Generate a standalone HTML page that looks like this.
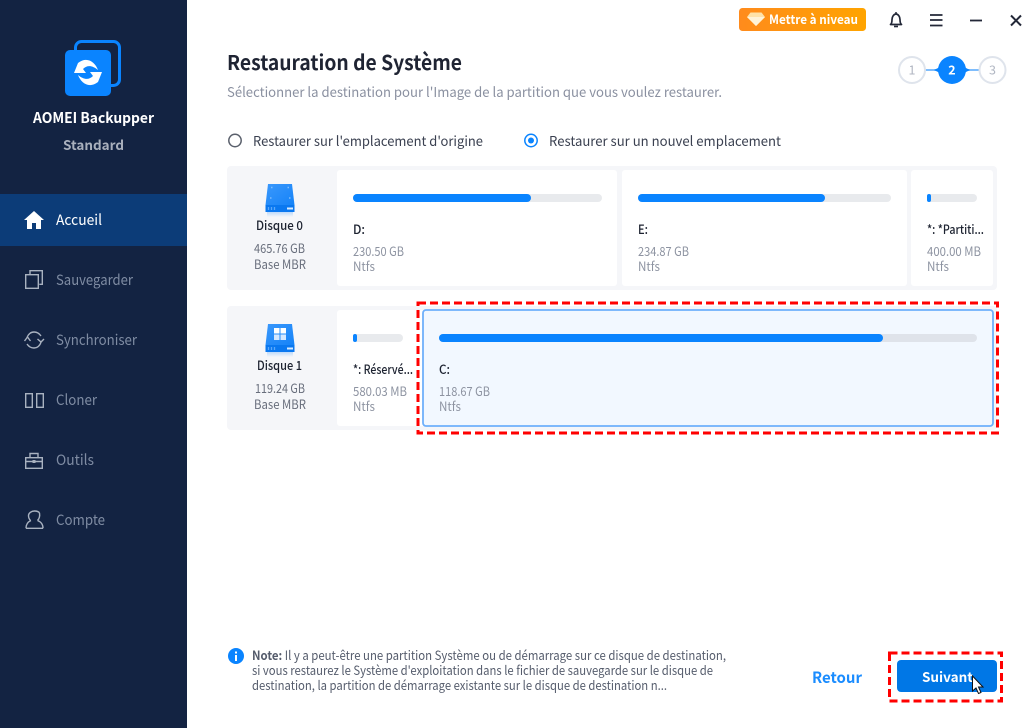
<!DOCTYPE html>
<html><head><meta charset="utf-8"><style>
html,body{margin:0;padding:0;background:#fff;width:1035px;height:728px;overflow:hidden}
svg{display:block}
text{font-family:"Noto Sans CJK SC","Liberation Sans",sans-serif;white-space:pre}
.side{fill:#7f8ca3;font-size:14.500px}
.cap{fill:#8d93a1;font-size:12.500px}
.lbl{fill:#1c2230;font-size:12.500px;font-weight:500}
.note{fill:#555c6c;font-size:12.500px}
.ic{fill:none;stroke:#a9b2c0;stroke-width:1.400}
</style></head><body>
<svg width="1035" height="728" viewBox="0 0 1035 728" xmlns="http://www.w3.org/2000/svg">
<defs>
<linearGradient id="og" x1="0" x2="1" y1="0" y2="0"><stop offset="0" stop-color="#ff8b1c"/><stop offset="1" stop-color="#ffa400"/></linearGradient>
<linearGradient id="dk" x1="0" x2="1" y1="0" y2="1"><stop offset="0" stop-color="#3a98fc"/><stop offset="1" stop-color="#1583f8"/></linearGradient>
<linearGradient id="sh" x1="0" x2="0" y1="0" y2="1"><stop offset="0" stop-color="#bcd9fb"/><stop offset="1" stop-color="#f5f6f9"/></linearGradient>
</defs>
<rect width="1035" height="728" fill="#fff"/>
<rect width="187" height="728" fill="#132342"/>
<rect y="194" width="187" height="52" fill="#0c3c78"/>

<!-- logo -->
<rect x="75.500" y="41.500" width="44" height="44" rx="6" fill="none" stroke="#0a84ff" stroke-width="3"/>
<rect x="65" y="50" width="46" height="46" rx="5" fill="#0a84ff"/>
<path d="M78 63L74 73L86 73L83 69C87 65 92 65 98 70C95 62 87 56 78 63z" fill="#fff"/>
<path d="M98 82L102 72L90 72L93 76C89 80 84 80 78 75C81 83 89 89 98 82z" fill="#fff"/>
<text x="33" y="123" font-size="14.500" font-weight="700" fill="#fff" textLength="121" lengthAdjust="spacingAndGlyphs">AOMEI Backupper</text>
<text x="63" y="150" font-size="13.500" font-weight="700" fill="#a9b0bd" textLength="61" lengthAdjust="spacingAndGlyphs">Standard</text>

<!-- nav -->
<path d="M24 220l10-9 10 9h-3v9h-5v-6h-4v6h-5v-9z" fill="#fff"/>
<text x="56" y="225" font-size="14.500" fill="#fff" textLength="46" lengthAdjust="spacingAndGlyphs">Accueil</text>
<rect x="25.700" y="274.700" width="12.600" height="13.600" class="ic"/>
<path d="M30 274v-3.300h12.300v13.600h-3" class="ic"/>
<text x="56" y="285" class="side" textLength="77" lengthAdjust="spacingAndGlyphs">Sauvegarder</text>
<path d="M27 338c1-4 4-6 7-6s5 1 7 4M41 342c-1 4-4 6-7 6s-5-1-7-4" class="ic"/>
<path d="M24.500 341l3-4 3 4M37.500 339l3.500 3 3-3" class="ic"/>
<text x="56" y="345" class="side" textLength="81" lengthAdjust="spacingAndGlyphs">Synchroniser</text>
<rect x="25.700" y="393.700" width="6.600" height="13.600" class="ic"/><rect x="36.700" y="393.700" width="6.600" height="13.600" class="ic"/>
<text x="56" y="405" class="side" textLength="41" lengthAdjust="spacingAndGlyphs">Cloner</text>
<rect x="25.700" y="457.700" width="16.600" height="10.600" class="ic"/>
<path d="M25.700 461.500h16.600M30 457.500v-4h8v4" class="ic"/><rect x="32.500" y="460" width="3" height="3" fill="#a9b2c0"/>
<text x="56" y="465" class="side" textLength="38" lengthAdjust="spacingAndGlyphs">Outils</text>
<path d="M30.500 520.500c-1.500-1.500-2-3-2-5 0-2.500 3-4.500 6-4.500 2.500 0 4.500 1 5 2" class="ic"/>
<path d="M39.500 513c.5 3-.5 6-2 7.500" class="ic"/>
<path d="M26 528.300c0-4 2-6.500 5-7.800M43 528.300c0-4-2-6.500-5.500-7.800M26 528.300h17" class="ic"/>
<text x="56" y="525" class="side" textLength="49" lengthAdjust="spacingAndGlyphs">Compte</text>

<!-- top bar -->
<rect x="739" y="8" width="127" height="23" rx="3.500" fill="url(#og)"/>
<path d="M750.500 12.500h11l3.500 4.500-9 9-9-9z" fill="#ffe2a8"/><path d="M747 17h18l-9 9z" fill="#fff3d8"/>
<text x="769" y="24" font-size="12.500" font-weight="700" fill="#fff" textLength="89" lengthAdjust="spacingAndGlyphs">Mettre à niveau</text>
<path d="M890.500 24.500c1.500-1 1.500-3 1.500-5 0-3 2-5.500 4-5.500s4 2.500 4 5.500c0 2 0 4 1.500 5z" fill="none" stroke="#232838" stroke-width="1.700" stroke-linejoin="round"/>
<path d="M894 26.500h4" stroke="#232838" stroke-width="1.600"/><path d="M896 12v2" stroke="#232838" stroke-width="1.500"/>
<path d="M930 15h12.500M930 20h12.500M930 25.500h12.500" stroke="#232838" stroke-width="1.800"/>
<path d="M970 20.500h12" stroke="#232838" stroke-width="1.800"/>
<path d="M1011 15.500l10 10M1021 15.500l-10 10" stroke="#232838" stroke-width="2"/>

<!-- steps -->
<path d="M925 70h14M965 70h14" stroke="#7fbdfc" stroke-width="2"/>
<path d="M934 70l6-3v6zM970 70l-6-3v6z" fill="#0a84ff"/>
<circle cx="912" cy="70" r="13" fill="#fff" stroke="#dfe4ec" stroke-width="2"/>
<circle cx="952" cy="70" r="14" fill="#0a84ff"/>
<circle cx="992.500" cy="70" r="13" fill="#fff" stroke="#dfe4ec" stroke-width="2"/>
<text x="912" y="74.500" font-size="12.500" fill="#b0b6c2" text-anchor="middle">1</text>
<text x="952" y="74.500" font-size="12.500" font-weight="700" fill="#fff" text-anchor="middle">2</text>
<text x="992.500" y="74.500" font-size="12.500" fill="#b0b6c2" text-anchor="middle">3</text>

<!-- heading -->
<text x="227" y="70" font-size="20.500" font-weight="700" fill="#1f2433" textLength="235" lengthAdjust="spacingAndGlyphs">Restauration de Système</text>
<text x="227" y="97" font-size="13.500" fill="#8a90a0" textLength="495" lengthAdjust="spacingAndGlyphs">Sélectionner la destination pour l'Image de la partition que vous voulez restaurer.</text>

<!-- radios -->
<circle cx="235" cy="140.500" r="6.200" fill="#fff" stroke="#5a606c" stroke-width="1.500"/>
<text x="253" y="146" font-size="13.500" fill="#3a4050" textLength="230" lengthAdjust="spacingAndGlyphs">Restaurer sur l'emplacement d'origine</text>
<circle cx="531" cy="140.500" r="6.200" fill="#fff" stroke="#0a84ff" stroke-width="1.500"/><circle cx="531" cy="140.500" r="3" fill="#0a84ff"/>
<text x="549" y="146" font-size="13.500" fill="#3a4050" textLength="232" lengthAdjust="spacingAndGlyphs">Restaurer sur un nouvel emplacement</text>

<!-- disk 0 -->
<rect x="227" y="166" width="770" height="124" rx="4" fill="#f5f6f9"/>
<rect x="267" y="212" width="26" height="5" fill="url(#sh)"/>
<path d="M268 184h24l2.500 21h-29z" fill="url(#dk)"/>
<rect x="265.500" y="205" width="29" height="7" fill="#0a78f0"/><rect x="287" y="207.500" width="6" height="2" fill="#d8ebff"/>
<path d="M268.500 207v3M271.500 207v3M274.500 207v3" stroke="#5aa8fa" stroke-width="1.300"/>
<path d="M271 187.500h1.500M287.500 187.500h1.500M270 198h1.500M289 198h1.500" stroke="#7dbcfd" stroke-width="1.500"/>
<text x="256" y="230" font-size="12.500" font-weight="500" fill="#1c2230" textLength="47" lengthAdjust="spacingAndGlyphs">Disque 0</text>
<text x="254" y="253" class="cap" style="fill:#686e7c" textLength="51" lengthAdjust="spacingAndGlyphs">465.76 GB</text>
<text x="254" y="269" class="cap" style="fill:#686e7c" textLength="52" lengthAdjust="spacingAndGlyphs">Base MBR</text>

<rect x="337" y="170" width="280" height="116" rx="3" fill="#fff"/>
<rect x="622" y="170" width="285" height="116" rx="3" fill="#fff"/>
<rect x="911" y="170" width="82" height="116" rx="3" fill="#fff"/>
<rect x="353" y="194" width="249" height="8" rx="4" fill="#e8eaed"/><rect x="353" y="194" width="178" height="8" rx="4" fill="#0a84ff"/>
<rect x="638" y="194" width="253" height="8" rx="4" fill="#e8eaed"/><rect x="638" y="194" width="187" height="8" rx="4" fill="#0a84ff"/>
<rect x="927" y="194" width="50" height="8" rx="4" fill="#e8eaed"/><rect x="927" y="194" width="4" height="8" rx="2" fill="#0a84ff"/>
<text x="353" y="234" class="lbl" textLength="12" lengthAdjust="spacingAndGlyphs">D:</text>
<text x="353" y="256" class="cap" textLength="51" lengthAdjust="spacingAndGlyphs">230.50 GB</text>
<text x="353" y="271" class="cap" textLength="22" lengthAdjust="spacingAndGlyphs">Ntfs</text>
<text x="638" y="234" class="lbl" textLength="10" lengthAdjust="spacingAndGlyphs">E:</text>
<text x="638" y="256" class="cap" textLength="51" lengthAdjust="spacingAndGlyphs">234.87 GB</text>
<text x="638" y="271" class="cap" textLength="22" lengthAdjust="spacingAndGlyphs">Ntfs</text>
<text x="927" y="234" class="lbl" textLength="57" lengthAdjust="spacingAndGlyphs">*: *Partiti...</text>
<text x="927" y="256" class="cap" textLength="54" lengthAdjust="spacingAndGlyphs">400.00 MB</text>
<text x="927" y="271" class="cap" textLength="22" lengthAdjust="spacingAndGlyphs">Ntfs</text>

<!-- disk 1 -->
<rect x="227" y="306" width="770" height="124" rx="4" fill="#f5f6f9"/>
<rect x="267" y="352" width="26" height="5" fill="url(#sh)"/>
<path d="M268 324h24l2.500 21h-29z" fill="url(#dk)"/>
<rect x="265.500" y="345" width="29" height="7" fill="#0a78f0"/><rect x="287" y="347.500" width="6" height="2" fill="#d8ebff"/>
<path d="M268.500 347v3M271.500 347v3M274.500 347v3" stroke="#5aa8fa" stroke-width="1.300"/>
<rect x="274" y="328" width="5.500" height="5.500" fill="#fff"/><rect x="280.500" y="328" width="5.500" height="5.500" fill="#fff"/>
<rect x="274" y="334.500" width="5.500" height="5.500" fill="#d5e8ff"/><rect x="280.500" y="334.500" width="5.500" height="5.500" fill="#d5e8ff"/>
<text x="257" y="370" font-size="12.500" font-weight="500" fill="#1c2230" textLength="45" lengthAdjust="spacingAndGlyphs">Disque 1</text>
<text x="255" y="393" class="cap" style="fill:#686e7c" textLength="50" lengthAdjust="spacingAndGlyphs">119.24 GB</text>
<text x="254" y="409" class="cap" style="fill:#686e7c" textLength="52" lengthAdjust="spacingAndGlyphs">Base MBR</text>

<rect x="337" y="310" width="90" height="116" rx="3" fill="#fff"/>
<rect x="353" y="334" width="50" height="8" rx="4" fill="#e8eaed"/><rect x="353" y="334" width="4" height="8" rx="2" fill="#0a84ff"/>
<text x="353" y="374" class="lbl" textLength="60" lengthAdjust="spacingAndGlyphs">*: Réservé...</text>
<text x="353" y="396" class="cap" textLength="54" lengthAdjust="spacingAndGlyphs">580.03 MB</text>
<text x="353" y="411" class="cap" textLength="22" lengthAdjust="spacingAndGlyphs">Ntfs</text>

<rect x="423" y="310" width="570" height="116" rx="3" fill="#f2f8ff" stroke="#6eb0fb" stroke-width="1.800"/>
<rect x="439" y="334" width="538" height="8" rx="4" fill="#dfe3ea"/><rect x="439" y="334" width="444" height="8" rx="4" fill="#0a84ff"/>
<text x="439" y="374" class="lbl" textLength="11" lengthAdjust="spacingAndGlyphs">C:</text>
<text x="439" y="396" class="cap" textLength="51" lengthAdjust="spacingAndGlyphs">118.67 GB</text>
<text x="439" y="411" class="cap" textLength="22" lengthAdjust="spacingAndGlyphs">Ntfs</text>
<rect x="418" y="303" width="579.500" height="130" fill="none" stroke="#f00" stroke-width="3" stroke-dasharray="8 4"/>

<!-- note -->
<circle cx="236" cy="656" r="8" fill="#0a84ff"/>
<rect x="235" y="655" width="2" height="6" fill="#fff"/><rect x="235" y="651.500" width="2" height="2" fill="#fff"/>
<text x="252" y="660" class="note" textLength="474" lengthAdjust="spacingAndGlyphs"><tspan font-weight="700">Note:</tspan> Il y a peut-être une partition Système ou de démarrage sur ce disque de destination,</text>
<text x="252" y="675" class="note" textLength="461" lengthAdjust="spacingAndGlyphs">si vous restaurez le Système d'exploitation dans le fichier de sauvegarde sur le disque de</text>
<text x="252" y="690" class="note" textLength="415" lengthAdjust="spacingAndGlyphs">destination, la partition de démarrage existante sur le disque de destination n...</text>

<!-- buttons -->
<text x="812" y="683" font-size="15.500" font-weight="700" fill="#1a8cff" textLength="50" lengthAdjust="spacingAndGlyphs">Retour</text>
<rect x="897" y="660" width="100" height="32" rx="4" fill="#0077e6"/>
<text x="922" y="682" font-size="13.500" font-weight="700" fill="#fff" textLength="51" lengthAdjust="spacingAndGlyphs">Suivant</text>
<rect x="889.500" y="653" width="112" height="48" fill="none" stroke="#f00" stroke-width="3" stroke-dasharray="8 4"/>
<path d="M972.500 676v15l3.500-3 2.500 5.500 2.500-1-2.500-5.500h4.500z" fill="#fff" stroke="#111" stroke-width="1"/>
</svg>
</body></html>
